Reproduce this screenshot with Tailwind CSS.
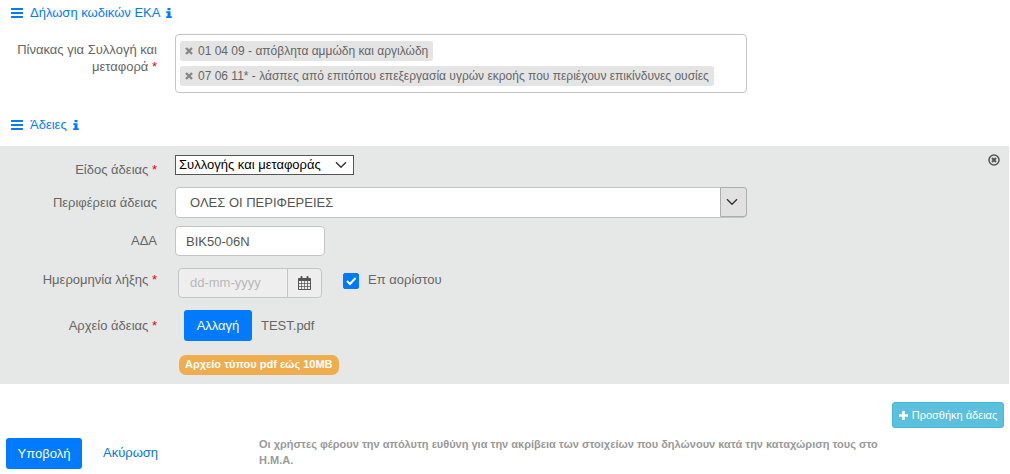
<!DOCTYPE html>
<html lang="el">
<head>
<meta charset="utf-8">
<meta name="viewport" content="width=device-width, initial-scale=1">
<title>Δήλωση κωδικών ΕΚΑ</title>
<script src="https://cdn.jsdelivr.net/npm/@tailwindcss/browser@4"></script>
</head>
<body class="bg-white font-['Liberation_Sans',Arial,sans-serif] text-[13px] leading-[18px] text-[#666]">
<svg class="hidden">
  <symbol id="bars" viewBox="0 0 12 10"><path fill="currentColor" d="M.5 0h11a.5.5 0 0 1 .5.5v1a.5.5 0 0 1-.5.5H.5a.5.5 0 0 1-.5-.5v-1A.5.5 0 0 1 .5 0zM.5 4h11a.5.5 0 0 1 .5.5v1a.5.5 0 0 1-.5.5H.5a.5.5 0 0 1-.5-.5v-1A.5.5 0 0 1 .5 4zM.5 8h11a.5.5 0 0 1 .5.5v1a.5.5 0 0 1-.5.5H.5a.5.5 0 0 1-.5-.5v-1A.5.5 0 0 1 .5 8z"/></symbol>
  <symbol id="info" viewBox="0 0 6 10"><path fill="currentColor" d="M1.500 0h3v2.200h-3zM.3 3.200h4.200v5h1.300V10H.2V8.200h1.300V5H.3z"/></symbol>
  <symbol id="times" viewBox="0 0 8 8"><path stroke="currentColor" stroke-width="2.400" d="M1 1l6 6M7 1L1 7"/></symbol>
  <symbol id="chevron" viewBox="0 0 12 8"><path fill="none" stroke="currentColor" stroke-width="1.400" d="M1 1.200l5 5 5-5"/></symbol>
</svg>
<main>
  <section class="pt-1">
    <h2 class="flex items-center pl-[11px] text-[#007bff]">
      <svg class="h-[10px] w-3"><use href="#bars"/></svg>
      <span class="ml-[7px]">Δήλωση κωδικών ΕΚΑ</span>
      <svg class="ml-[6px] h-[10px] w-[6px]"><use href="#info"/></svg>
    </h2>
    <div class="mt-3 flex items-start">
      <div id="codes-label" class="mt-[7px] w-[157px] shrink-0 text-right leading-[17px]">Πίνακας για Συλλογή και<br>μεταφορά <span class="text-red-600">*</span></div>
      <ul aria-labelledby="codes-label" class="ml-[18px] flex w-[572px] flex-col items-start gap-[5px] rounded-[4px] border border-[#c4c4c4] px-1 py-[6px] text-[12px]">
        <li class="flex h-5 items-center rounded-[3px] bg-[#e4e4e4] px-[5px]"><button type="button" aria-label="Αφαίρεση 01 04 09" class="text-[#888]"><svg class="size-2"><use href="#times"/></svg></button><span class="ml-[5px]">01 04 09 - απόβλητα αμμώδη και αργιλώδη</span></li>
        <li class="flex h-5 items-center rounded-[3px] bg-[#e4e4e4] px-[5px]"><button type="button" aria-label="Αφαίρεση 07 06 11" class="text-[#888]"><svg class="size-2"><use href="#times"/></svg></button><span class="ml-[5px] whitespace-nowrap">07 06 11* - λάσπες από επιτόπου επεξεργασία υγρών εκροής που περιέχουν επικίνδυνες ουσίες</span></li>
      </ul>
    </div>
  </section>

  <section class="mt-[23px]">
    <h2 class="flex items-center pl-[11px] text-[#007bff]">
      <svg class="h-[10px] w-3"><use href="#bars"/></svg>
      <span class="ml-[7px]">Άδειες</span>
      <svg class="ml-[6px] h-[10px] w-[6px]"><use href="#info"/></svg>
    </h2>
    <div class="relative mt-3 mr-px bg-[#e6e8e7] pt-[9px] pb-[9px]">
      <button type="button" aria-label="Κλείσιμο" class="absolute top-2 right-[9px] text-[#555]">
        <svg class="size-3" viewBox="0 0 12 12" fill="none" stroke="currentColor"><circle cx="6" cy="6" r="5" stroke-width="1.500"/><path stroke-width="2" d="M4 4l4 4M8 4L4 8"/></svg>
      </button>
      <div class="flex items-start">
        <label for="kind" class="mt-[6px] w-[157px] text-right">Είδος άδειας <span class="text-red-600">*</span></label>
        <div class="relative ml-[18px] w-[179px]">
          <select id="kind" class="block h-5 w-full appearance-none border border-[#555] bg-white pl-[3px] text-[13px] leading-[18px] text-black"><option>Συλλογής και μεταφοράς</option></select>
          <svg class="pointer-events-none absolute top-[6px] right-[7px] h-2 w-3 text-[#333]"><use href="#chevron"/></svg>
        </div>
      </div>
      <div class="mt-2 flex items-center">
        <label for="region" class="w-[157px] text-right">Περιφέρεια άδειας</label>
        <div class="relative ml-[18px] w-[572px]">
          <select id="region" class="block h-[31px] w-full appearance-none rounded-[4px] border border-[#c4c4c4] bg-white pl-[14px] text-[13px] text-[#555]"><option>ΟΛΕΣ ΟΙ ΠΕΡΙΦΕΡΕΙΕΣ</option></select>
          <span class="pointer-events-none absolute top-0 right-0 flex h-[30px] w-[27px] items-center rounded-r-[3px] border border-[#adadad] bg-[#e1e1e1] pl-[5px] text-[#333]"><svg class="h-2 w-3"><use href="#chevron"/></svg></span>
        </div>
      </div>
      <div class="mt-2 flex items-center">
        <label for="ada" class="w-[157px] text-right">ΑΔΑ</label>
        <input id="ada" value="ΒΙΚ50-06Ν" class="ml-[18px] h-[30px] w-[150px] rounded-[4px] border border-[#c4c4c4] bg-white px-[10px] text-[13px] text-[#555]">
      </div>
      <div class="mt-3 flex items-start">
        <label for="expiry" class="mt-[3px] w-[157px] text-right">Ημερομηνία λήξης <span class="text-red-600">*</span></label>
        <div class="ml-[21px] flex h-[30px] w-[144px] rounded-[4px] border border-[#c4c4c4] bg-[#eee]">
          <input id="expiry" placeholder="dd-mm-yyyy" disabled class="min-w-0 flex-1 px-[11px] text-[13px] placeholder:text-[#b8b8b8]">
          <button type="button" aria-label="Ημερολόγιο" class="flex w-[34px] items-center justify-center border-l border-[#c4c4c4] text-[#555]">
            <svg class="h-[14px] w-[13px]" viewBox="0 0 13 14"><path fill="currentColor" fill-rule="evenodd" d="M1 2h1.500V.8c0-.5.300-.8.800-.8h.4c.5 0 .8.300.8.800V2h4V.8c0-.5.300-.8.800-.8h.4c.5 0 .8.300.8.800V2H12c.6 0 1 .4 1 1v10c0 .6-.4 1-1 1H1c-.6 0-1-.4-1-1V3c0-.6.400-1 1-1zM1 5v2h2V5zm2.700 0v2h2.400V5zm3.100 0v2h2.400V5zM10 5v2h2V5zM1 7.700v2.200h2V7.700zm2.700 0v2.200h2.400V7.700zm3.100 0v2.200h2.400V7.700zm3.200 0v2.200h2V7.700zM1 10.700V13h2v-2.300zm2.700 0V13h2.400v-2.300zm3.100 0V13h2.400v-2.300zm3.200 0V13h2v-2.300z"/></svg>
          </button>
        </div>
        <label class="ml-[21px] mt-[3px] flex items-start gap-[9px]">
          <span class="relative mt-[2px] block size-4">
            <input type="checkbox" checked class="peer block size-4 appearance-none rounded-[2px] border border-[#0078ff] bg-white checked:bg-[#0078ff]">
            <svg class="pointer-events-none absolute inset-0 hidden size-4 peer-checked:block" viewBox="0 0 16 16" fill="none" stroke="#fff" stroke-width="2"><path d="M4 8l3 3 5.500-6"/></svg>
          </span>
          <span>Επ αορίστου</span>
        </label>
      </div>
      <div class="mt-3 flex items-center">
        <span id="file-label" class="w-[157px] text-right">Αρχείο άδειας <span class="text-red-600">*</span></span>
        <button type="button" aria-describedby="file-label" class="ml-[27px] h-[31px] w-[68px] rounded-[3px] bg-[#007bff] text-[13px] text-white">Αλλαγή</button>
        <span class="ml-[9px]">TEST.pdf</span>
      </div>
      <div class="mt-[14px] ml-[179px] flex">
        <span class="h-5 rounded-[7px] bg-[#f0ad4e] px-[6px] text-[11px] leading-[19px] font-bold text-white">Αρχείο τύπου pdf εώς 10MB</span>
      </div>
    </div>
  </section>

  <div class="mt-[18px] mr-[6px] flex justify-end">
    <button type="button" class="flex h-[26px] w-28 items-center justify-center gap-1 rounded-[3px] border border-[#46b8da] bg-[#5bc0de] text-[11px] whitespace-nowrap text-white">
      <svg class="size-[9px]" viewBox="0 0 9 9"><path fill="#fff" d="M3.200 0h2.600v3.200H9v2.600H5.800V9H3.200V5.800H0V3.200h3.200z"/></svg>
      Προσθήκη άδειας
    </button>
  </div>
  <footer class="mt-2 flex items-start pl-[6px]">
    <button type="button" class="mt-[2px] h-[31px] w-[76px] rounded-[3px] bg-[#007bff] text-[13px] text-white">Υποβολή</button>
    <a href="#" class="ml-[21px] mt-2 text-[13px] text-[#0275d8]">Ακύρωση</a>
    <p class="ml-auto mr-[111px] w-[640px] text-[11px] leading-4 font-bold text-[#999]">Οι χρήστες φέρουν την απόλυτη ευθύνη για την ακρίβεια των στοιχείων που δηλώνουν κατά την καταχώριση τους στο Η.Μ.Α.</p>
  </footer>
</main>
</body>
</html>
